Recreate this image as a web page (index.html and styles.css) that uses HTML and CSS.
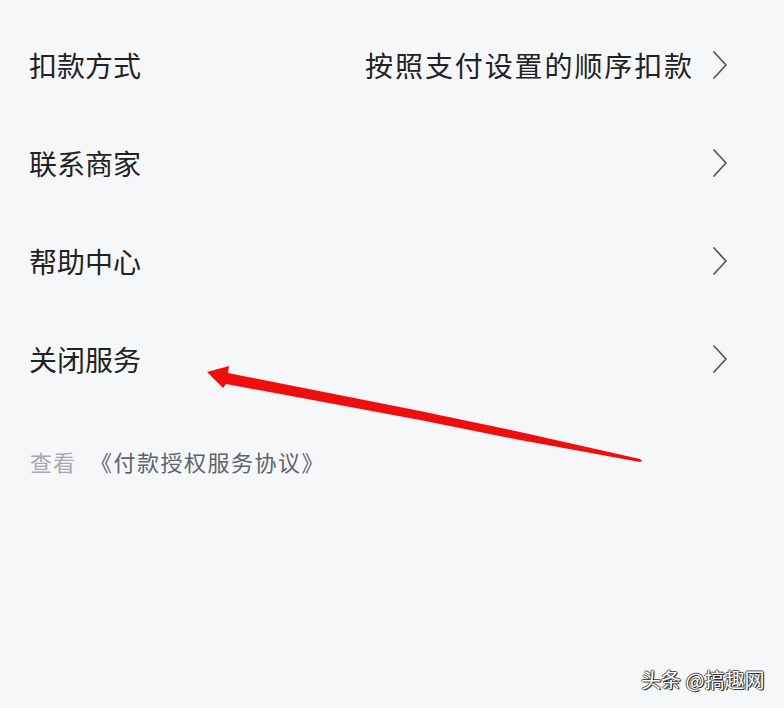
FILE: index.html
```html
<!DOCTYPE html>
<html lang="zh-CN">
<head>
<meta charset="utf-8">
<link rel="stylesheet" href="styles.css">
</head>
<body>
<div class="page">
  <ul class="list">
    <li class="row">
      <span class="label">扣款方式</span>
      <span class="value">按照支付设置的顺序扣款</span>
      <svg class="chev" viewBox="0 0 16 30" width="16" height="30"><path d="M2 2 L14 15 L2 28" fill="none" stroke="#5a5a5a" stroke-width="1.8" stroke-linecap="round" stroke-linejoin="round"/></svg>
    </li>
    <li class="row">
      <span class="label">联系商家</span>
      <svg class="chev" viewBox="0 0 16 30" width="16" height="30"><path d="M2 2 L14 15 L2 28" fill="none" stroke="#5a5a5a" stroke-width="1.8" stroke-linecap="round" stroke-linejoin="round"/></svg>
    </li>
    <li class="row">
      <span class="label">帮助中心</span>
      <svg class="chev" viewBox="0 0 16 30" width="16" height="30"><path d="M2 2 L14 15 L2 28" fill="none" stroke="#5a5a5a" stroke-width="1.8" stroke-linecap="round" stroke-linejoin="round"/></svg>
    </li>
    <li class="row">
      <span class="label">关闭服务</span>
      <svg class="chev" viewBox="0 0 16 30" width="16" height="30"><path d="M2 2 L14 15 L2 28" fill="none" stroke="#5a5a5a" stroke-width="1.8" stroke-linecap="round" stroke-linejoin="round"/></svg>
    </li>
  </ul>
  <p class="agreement"><span class="see">查看</span><span class="link">《付款授权服务协议》</span></p>

  <svg class="arrow" width="784" height="708" viewBox="0 0 784 708">
    <defs>
      <filter id="soft" x="-5%" y="-20%" width="110%" height="140%">
        <feGaussianBlur stdDeviation="0.6"/>
      </filter>
    </defs>
    <g filter="url(#soft)" fill="#f01010">
      <polygon points="207,372 229,366 228,373 420,411 520,432 640,459 642,461 640,462 520,440 420,420 226,384 223,388"/>
    </g>
  </svg>

  <div class="watermark">头条 @搞趣网</div>
</div>
</body>
</html>
```

FILE: styles.css
```css
html, body {
  margin: 0;
  padding: 0;
  background: #f6f7f9;
}
body {
  font-family: "Noto Sans CJK SC", "Noto Sans", sans-serif;
  color: #222;
}
.page {
  position: relative;
  width: 784px;
  height: 708px;
  overflow: hidden;
  padding-top: 16px;
  box-sizing: border-box;
}
.list {
  list-style: none;
  margin: 0;
  padding: 0;
}
.row {
  display: flex;
  align-items: center;
  height: 98px;
  padding: 0 56px 0 29px;
}
.label {
  font-size: 28px;
  line-height: 1;
  color: #222;
  flex: 1;
}
.value {
  font-size: 28px;
  line-height: 1;
  letter-spacing: 1.9px;
  color: #222;
  margin-right: 18px;
}
.chev {
  display: block;
  flex: none;
}
.agreement {
  margin: 42px 0 0 30px;
  font-size: 22px;
  line-height: 1;
  display: flex;
  align-items: center;
}
.see {
  color: #a6a9ae;
  letter-spacing: 1px;
}
.link {
  color: #5d6470;
  margin-left: 14px;
  letter-spacing: 1.5px;
}
.arrow {
  position: absolute;
  left: 0;
  top: 0;
  pointer-events: none;
}
.watermark {
  position: absolute;
  left: 641px;
  top: 668px;
  font-size: 20px;
  line-height: 24px;
  color: #fff;
  text-shadow: 1px 1px 0 #333, -1px 0 0 #555, 0 -1px 0 #555, 1px 0 1px #333;
  white-space: nowrap;
}
```
